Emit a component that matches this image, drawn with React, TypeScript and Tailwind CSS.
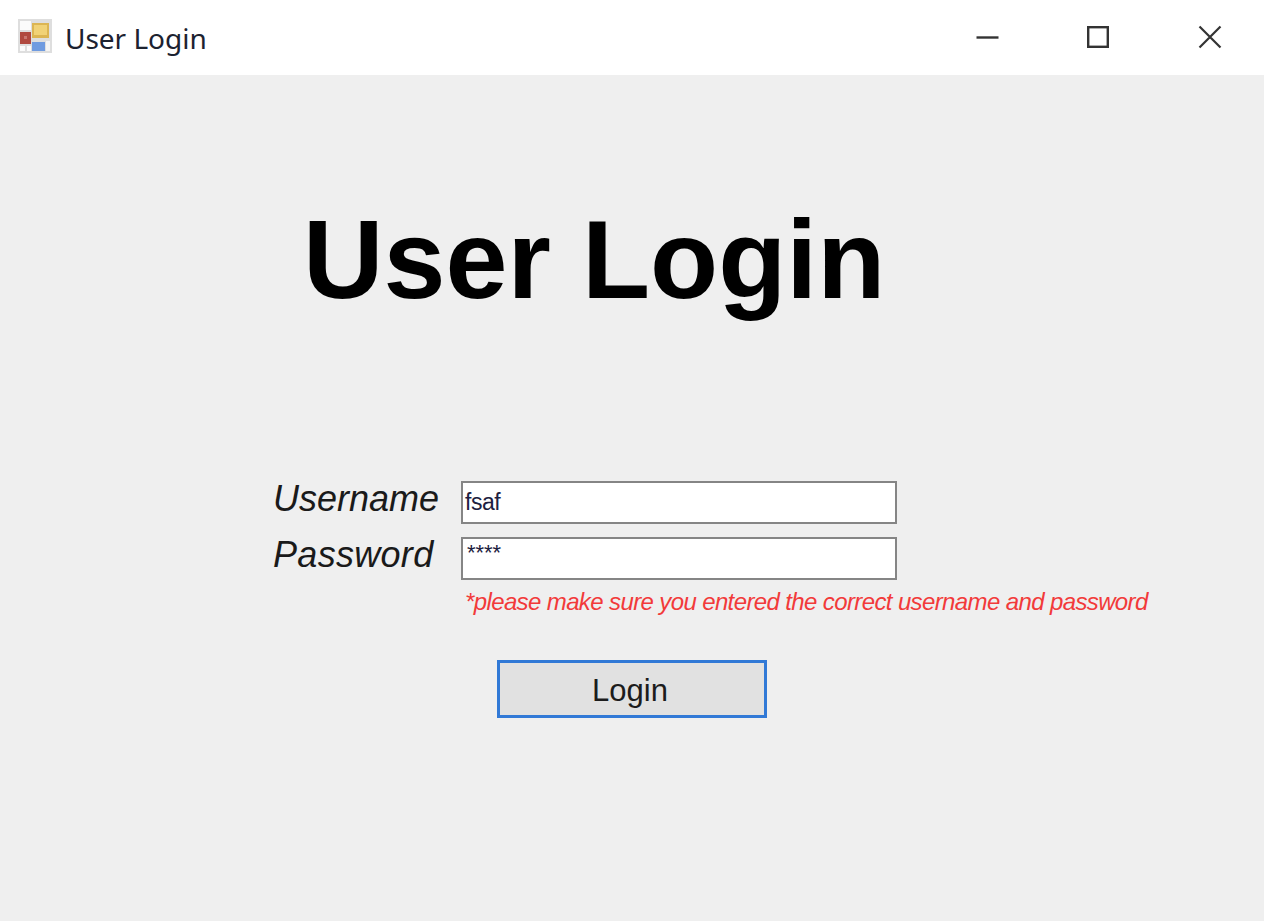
export default function App() {
  return (
    <div className="w-[1268px] h-[922px] bg-white overflow-hidden font-['Liberation_Sans',Arial,sans-serif]">
      <div className="w-[1264px] h-[921px] flex flex-col">
        {/* title bar */}
        <div className="h-[75px] flex items-center bg-white shrink-0">
          <svg className="ml-[18px] mb-[3px] shrink-0" width="34" height="34" viewBox="0 0 34 34">
            <rect width="34" height="34" fill="#dedede" />
            <rect x="2" y="2" width="11" height="9" fill="#fbfbfb" />
            <rect x="2" y="27" width="5" height="5" fill="#fbfbfb" />
            <rect x="9" y="27" width="4" height="5" fill="#fbfbfb" />
            <rect x="28" y="22" width="4" height="10" fill="#f4f4f4" />
            <rect x="2" y="13" width="11" height="12" fill="#b0493f" />
            <rect x="6" y="17" width="3" height="3" fill="#c9766e" />
            <rect x="14" y="4" width="17" height="15" fill="#dcb552" />
            <rect x="16" y="6" width="13" height="10" fill="#f1d276" />
            <rect x="14" y="23" width="13" height="9" fill="#6f9be0" />
          </svg>
          <span className="ml-[13px] mt-[1px] text-[28px] leading-none font-['Noto_Sans',sans-serif] text-[#1c2230] tracking-[-0.02px]">User Login</span>
          <div className="ml-auto flex items-center mr-[42px] gap-[75px] mb-[2px]">
            <svg width="36" height="24" viewBox="0 0 36 24">
              <path d="M0.5 12.5H22.5" stroke="#333" strokeWidth="2.4" />
            </svg>
            <svg width="24" height="24" viewBox="0 0 24 24" className="-ml-[1px]">
              <rect x="2.2" y="2.2" width="19.6" height="19.6" fill="none" stroke="#333" strokeWidth="2.4" />
            </svg>
            <svg width="24" height="24" viewBox="0 0 24 24" className="ml-[13px]">
              <path d="M1.5 1.5L22.5 22.5M22.5 1.5L1.5 22.5" stroke="#333" strokeWidth="2.2" />
            </svg>
          </div>
        </div>

        {/* form area */}
        <div className="flex-1 bg-[#efefef] flex flex-col">
          <h1 className="ml-[303px] mt-[122px] text-[111.5px] leading-[125px] font-bold text-black whitespace-nowrap">User Login</h1>

          <div className="mt-[159px] ml-[273px] flex items-center h-[42px]">
            <label className="w-[188px] italic text-[36px] leading-none text-[#1a1a1a] mb-[6px]">Username</label>
            <div className="w-[436px] h-[43px] border-2 border-[#858585] bg-white flex items-center pl-[2px] text-[23px] tracking-[-0.5px] text-[#1c2040]">fsaf</div>
          </div>
          <div className="mt-[14px] ml-[273px] flex items-center h-[42px]">
            <label className="w-[188px] italic text-[36px] leading-none tracking-[0.3px] text-[#1a1a1a] mb-[6px]">Password</label>
            <div className="w-[436px] h-[43px] border-2 border-[#858585] bg-white pl-[4px] pt-[3px] text-[22px] leading-[22px] tracking-[-0.1px] text-[#1c2040]">****</div>
          </div>
          <p className="ml-[465px] mt-[9px] italic text-[24px] leading-[28px] tracking-[-0.62px] text-[#f23a3a] whitespace-nowrap">*please make sure you entered the correct username and password</p>

          <button className="ml-[497px] mt-[44px] w-[270px] h-[58px] border-[3px] border-[#3179d6] bg-[#e1e1e1] text-[31px] text-[#1c1c1c] flex items-center justify-center pt-[4px] pr-[4px]">Login</button>
        </div>
      </div>
    </div>
  );
}
